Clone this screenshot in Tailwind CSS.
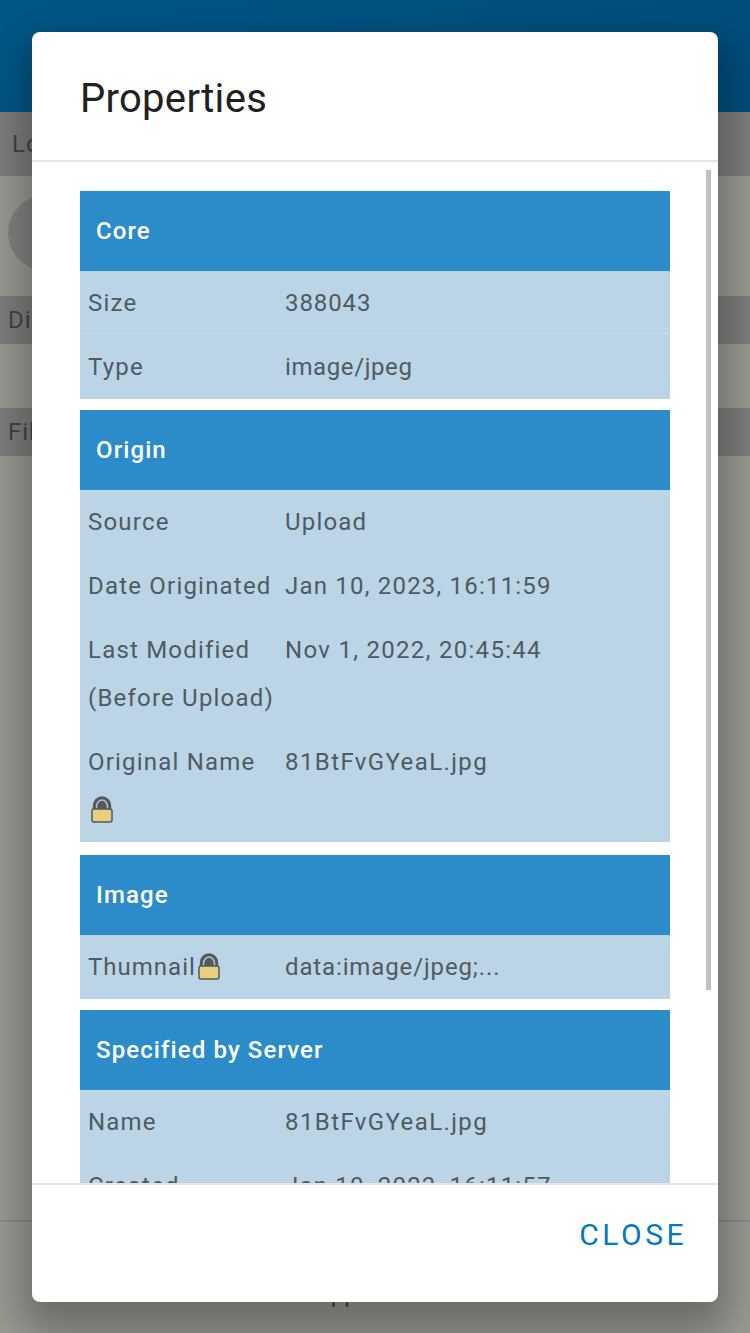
<!DOCTYPE html>
<html lang="en">
<head>
    <meta charset="UTF-8">
    <meta name="viewport" content="width=device-width, initial-scale=1.0">
    <title>Properties</title>
    <script src="https://cdn.jsdelivr.net/npm/@tailwindcss/browser@4"></script>
</head>
<body class="font-['Roboto',sans-serif] bg-[#9a9a93]">
    <div class="relative w-[750px] h-[1333px] overflow-hidden">
        <!-- Page behind the dialog -->
        <div class="h-[112px] bg-gradient-to-r from-[#005788] to-[#004d7c]"></div>
        <div class="h-[64px] bg-[#7d7d7d] pl-[12px] flex items-center text-[24px] tracking-[1px] text-[#444]">Location</div>
        <div class="h-[120px] pl-[8px] pt-[19px]">
            <div class="w-[76px] h-[76px] rounded-full bg-[#828280]"></div>
        </div>
        <div class="h-[48px] bg-[#7d7d7d] pl-[8px] flex items-center text-[24px] tracking-[1px] text-[#444]">Display</div>
        <div class="h-[64px]"></div>
        <div class="h-[48px] bg-[#7d7d7d] pl-[8px] flex items-center text-[24px] tracking-[1px] text-[#444]">Files</div>
        <div class="mt-[764px] border-t-2 border-[#8c8c86] h-[113px] pl-[315px] pt-[54px] text-[24px] text-[#444]">App</div>

        <!-- Dialog -->
        <div class="absolute left-[32px] top-[32px] w-[686px] h-[1270px] bg-white rounded-[8px] shadow-[0_20px_40px_10px_rgba(0,0,0,0.3)] flex flex-col overflow-hidden">
            <div class="h-[130px] shrink-0 border-b-2 border-[#e5e5e5] pl-[48px] pt-[37px] text-[40px] leading-[60px] tracking-[0.3px] text-[#212121]">Properties</div>

            <div class="relative flex-1 overflow-hidden pl-[48px] pt-[29px]">
                <div class="w-[590px] text-[24px] leading-[48px] tracking-[1.2px] text-[#505a60]">
                    <section>
                        <h3 class="h-[80px] bg-[#2b8cc9] pl-[16px] flex items-center text-white font-medium tracking-[1.1px]">Core</h3>
                        <div class="grid grid-cols-[197px_1fr] bg-[#bbd5e7] px-[8px] pt-[8px] h-[62px]"><div>Size</div><div class="tracking-[0.9px]">388043</div></div>
                        <div class="grid grid-cols-[197px_1fr] bg-[#bbd5e7] border-t border-[#c8dfec] px-[8px] pt-[9px] h-[66px]"><div>Type</div><div class="tracking-[0.6px]">image/jpeg</div></div>
                    </section>
                    <section class="mt-[11px]">
                        <h3 class="h-[80px] bg-[#2b8cc9] pl-[16px] flex items-center text-white font-medium tracking-[1.1px]">Origin</h3>
                        <div class="grid grid-cols-[197px_1fr] content-start gap-y-[16px] bg-[#bbd5e7] px-[8px] pt-[8px] h-[352px]">
                            <div>Source</div><div>Upload</div>
                            <div>Date Originated</div><div>Jan 10, 2023, 16:11:59</div>
                            <div class="pr-[4px]">Last Modified (Before Upload)</div><div class="tracking-[1.3px]">Nov 1, 2022, 20:45:44</div>
                            <div class="pr-[8px]">Original Name
                                <svg class="block mt-[10px] ml-[2px]" width="24" height="28" viewBox="0 0 24 28"><path d="M3.500 14V10a8.500 9 0 0 1 17 0v4" fill="#505a60" stroke="#505a60" stroke-width="1.500"/><path d="M6.500 14V10.500a5.500 6.500 0 0 1 11 0V14" fill="#505a60" stroke="#b9bfc2" stroke-width="1.500"/><rect x="2" y="13" width="20" height="13" rx="2" fill="#e8cf7e" stroke="#505a60" stroke-width="1.500"/></svg>
                            </div><div class="tracking-[1.4px]">81BtFvGYeaL.jpg</div>
                        </div>
                    </section>
                    <section class="mt-[13px]">
                        <h3 class="h-[80px] bg-[#2b8cc9] pl-[16px] flex items-center text-white font-medium tracking-[1.1px]">Image</h3>
                        <div class="grid grid-cols-[197px_1fr] bg-[#bbd5e7] px-[8px] pt-[8px] h-[64px]">
                            <div class="flex items-center h-[48px]"><span class="tracking-[1px]">Thumnail</span><svg class="ml-[1px]" width="24" height="28" viewBox="0 0 24 28"><path d="M3.500 14V10a8.500 9 0 0 1 17 0v4" fill="#505a60" stroke="#505a60" stroke-width="1.500"/><path d="M6.500 14V10.500a5.500 6.500 0 0 1 11 0V14" fill="#505a60" stroke="#b9bfc2" stroke-width="1.500"/><rect x="2" y="13" width="20" height="13" rx="2" fill="#e8cf7e" stroke="#505a60" stroke-width="1.500"/></svg></div>
                            <div class="tracking-[0.87px]">data:image/jpeg;...</div>
                        </div>
                    </section>
                    <section class="mt-[11px]">
                        <h3 class="h-[80px] bg-[#2b8cc9] pl-[16px] flex items-center text-white font-medium tracking-[1.1px]">Specified by Server</h3>
                        <div class="grid grid-cols-[197px_1fr] content-start gap-y-[16px] bg-[#bbd5e7] px-[8px] pt-[8px] h-[200px]">
                            <div>Name</div><div class="tracking-[1.4px]">81BtFvGYeaL.jpg</div>
                            <div>Created</div><div>Jan 10, 2023, 16:11:57</div>
                        </div>
                    </section>
                </div>
                <div class="absolute left-[674px] top-[8px] w-[5px] h-[820px] bg-[#c1c1c1]"></div>
            </div>

            <div class="h-[119px] shrink-0 border-t-2 border-[#e5e5e5] flex justify-end pr-[31px] pt-[26px]">
                <span class="text-[30px] leading-[48px] tracking-[3.500px] text-[#007ac1]">CLOSE</span>
            </div>
        </div>
    </div>
</body>
</html>
